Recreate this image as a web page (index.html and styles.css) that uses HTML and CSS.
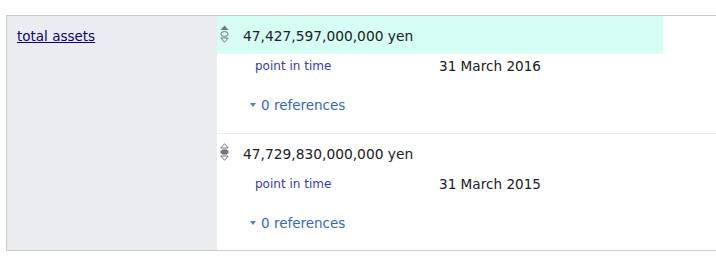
FILE: index.html
```html
<!DOCTYPE html>
<html lang="en">
<head>
  <meta charset="UTF-8">
  <title>total assets</title>
  <link rel="stylesheet" href="styles.css">
</head>
<body>
  <div class="statement-group">
    <div class="property">
      <a href="#" class="property-link">total assets</a>
    </div>
    <div class="statements">

      <!-- preferred rank -->
      <div class="statement">
        <div class="mainsnak preferred">
          <svg class="rank" width="9" height="18" viewBox="0 0 9 18">
            <path d="M4.5 0.5 L8.5 5 L0.5 5 Z" fill="#72777d"/>
            <ellipse cx="4.5" cy="9" rx="3.6" ry="2.4" fill="none" stroke="#72777d" stroke-width="1"/>
            <path d="M0.8 13 L8.2 13 L4.5 17.3 Z" fill="none" stroke="#72777d" stroke-width="1"/>
          </svg>
          <span class="value">47,427,597,000,000 yen</span>
        </div>
        <div class="qualifier">
          <span class="qualifier-property">point in time</span>
          <span class="qualifier-value">31 March 2016</span>
        </div>
        <div class="references">
          <span class="toggle"></span>0 references
        </div>
      </div>

      <!-- normal rank -->
      <div class="statement">
        <div class="mainsnak">
          <svg class="rank" width="9" height="18" viewBox="0 0 9 18">
            <path d="M4.5 0.7 L8.2 5 L0.8 5 Z" fill="none" stroke="#72777d" stroke-width="1"/>
            <ellipse cx="4.5" cy="9" rx="4" ry="2.8" fill="#72777d"/>
            <path d="M0.8 13 L8.2 13 L4.5 17.3 Z" fill="none" stroke="#72777d" stroke-width="1"/>
          </svg>
          <span class="value">47,729,830,000,000 yen</span>
        </div>
        <div class="qualifier">
          <span class="qualifier-property">point in time</span>
          <span class="qualifier-value">31 March 2015</span>
        </div>
        <div class="references">
          <span class="toggle"></span>0 references
        </div>
      </div>

    </div>
  </div>
</body>
</html>
```

FILE: styles.css
```css
body {
  margin: 0;
  padding: 15px 0 0 6px;
  overflow: hidden;
  font-family: 'DejaVu Sans', Verdana, sans-serif;
  color: #202122;
  background: #fff;
}

.statement-group {
  display: flex;
  width: 709px;
  border: 1px solid #c8ccd1;
  border-right: none;
}

.property {
  width: 200px;
  padding: 10px 0 0 10px;
  background: #eaecf0;
  font-size: 13.5px;
  line-height: 20px;
}

.property-link {
  color: #0b0080;
  text-decoration: underline;
}

.statements {
  flex: 1;
}

.statement {
  height: 117px;
  border-bottom: 1px solid #eaecf0;
}

.statement:last-child {
  height: 116px;
  border-bottom: none;
}

.mainsnak {
  display: flex;
  align-items: center;
  width: 444px;
  height: 36px;
  padding: 2px 0 0 2px;
}

.mainsnak.preferred {
  background: #d5fdf4;
}

.rank {
  margin: -4px 14px 0 1px;
}

.value {
  font-size: 13.8px;
}

.qualifier {
  display: flex;
  align-items: center;
  height: 23px;
  padding-left: 38px;
}

.qualifier-property {
  width: 184px;
  font-size: 12px;
  color: #3a3aa8;
}

.qualifier-value {
  font-size: 13.6px;
}

.references {
  display: flex;
  align-items: center;
  margin-top: 18px;
  padding-left: 33px;
  height: 20px;
  font-size: 13.5px;
  color: #3366cc;
}

.toggle {
  width: 0;
  height: 0;
  margin-right: 5px;
  border-left: 3.5px solid transparent;
  border-right: 3.5px solid transparent;
  border-top: 4px solid #5a7fb8;
}
```
